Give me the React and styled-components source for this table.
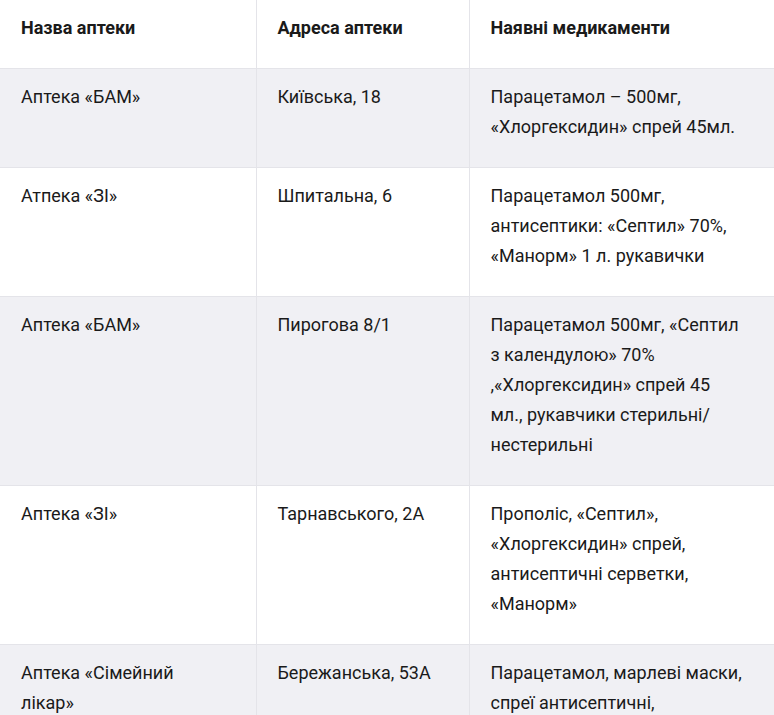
import React from 'react'
import styled, { createGlobalStyle } from 'styled-components'

const GlobalStyle = createGlobalStyle`
    html, body {
        margin: 0;
        padding: 0;
        background: #ffffff;
    }
    body {
        font-family: Roboto, "Open Sans", "Noto Sans", sans-serif;
        color: #1a1a1a;
    }
`;

const Table = styled.table`
    width: 774px;
    border-collapse: collapse;
    table-layout: fixed;
    font-size: 18px;
    line-height: 30px;
`;

const HeadRow = styled.tr`
    background: #ffffff;
`;

const Row = styled.tr`
    background: ${props => props.$striped ? '#f0f0f4' : '#ffffff'};
    border-top: 1px solid #e4e4e9;
`;

const HeadCell = styled.th`
    text-align: left;
    vertical-align: top;
    font-weight: 700;
    padding: 13px 21px 25px;
    border-right: 1px solid #e4e4e9;
    &:last-child {
        border-right: none;
    }
`;

const Cell = styled.td`
    vertical-align: top;
    padding: 13px 21px 25px;
    border-right: 1px solid #e4e4e9;
    &:last-child {
        border-right: none;
    }
`;

// lines kept as in the original layout so wrapping matches
const Line = styled.span`
    display: block;
    white-space: nowrap;
`;

const pharmacies = [
    { name: ['Аптека «БАМ»'], address: 'Київська, 18', meds: ['Парацетамол – 500мг,', '«Хлоргексидин» спрей 45мл.'] },
    { name: ['Атпека «ЗІ»'], address: 'Шпитальна, 6', meds: ['Парацетамол 500мг,', 'антисептики: «Септил» 70%,', '«Манорм» 1 л. рукавички'] },
    { name: ['Аптека «БАМ»'], address: 'Пирогова 8/1', meds: ['Парацетамол 500мг, «Септил', 'з календулою» 70%', ',«Хлоргексидин» спрей 45', 'мл., рукавчики стерильні/', 'нестерильні'] },
    { name: ['Аптека «ЗІ»'], address: 'Тарнавського, 2А', meds: ['Прополіс, «Септил»,', '«Хлоргексидин» спрей,', 'антисептичні серветки,', '«Манорм»'] },
    { name: ['Аптека «Сімейний', 'лікар»'], address: 'Бережанська, 53А', meds: ['Парацетамол, марлеві маски,', 'спреї антисептичні,'] },
];

const App = () => {
    return (
        <>
            <GlobalStyle />
            <Table>
                <colgroup>
                    <col style={{ width: '256px' }} />
                    <col style={{ width: '213px' }} />
                    <col />
                </colgroup>
                <thead>
                    <HeadRow>
                        <HeadCell>Назва аптеки</HeadCell>
                        <HeadCell>Адреса аптеки</HeadCell>
                        <HeadCell>Наявні медикаменти</HeadCell>
                    </HeadRow>
                </thead>
                <tbody>
                    {pharmacies.map((p, i) => (
                        <Row key={i} $striped={i % 2 === 0}>
                            <Cell>{p.name.map((l, j) => <Line key={j}>{l}</Line>)}</Cell>
                            <Cell>{p.address}</Cell>
                            <Cell>{p.meds.map((l, j) => <Line key={j}>{l}</Line>)}</Cell>
                        </Row>
                    ))}
                </tbody>
            </Table>
        </>
    )
}

export default App
